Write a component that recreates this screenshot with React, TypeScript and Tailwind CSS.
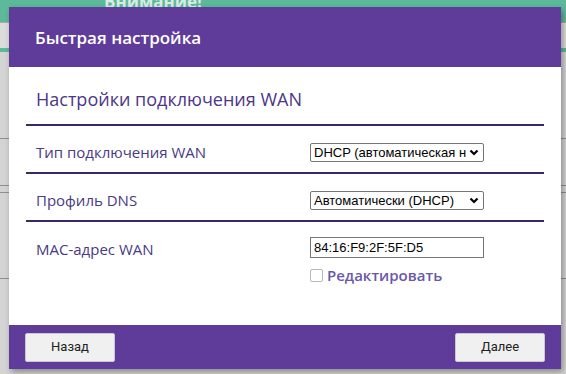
const rows = [
  { label: "Тип подключения WAN", value: "DHCP (автоматическая настройка)" },
  { label: "Профиль DNS", value: "Автоматически (DHCP)" },
];

const arial = { fontFamily: '"Liberation Sans", Arial, sans-serif' };

function Chevron() {
  return (
    <svg className="h-[9px] w-[10px]" viewBox="0 0 10 9" fill="none">
      <path d="M1.5 2.5 L5 6 L8.5 2.5" stroke="#000" strokeWidth="2.2" />
    </svg>
  );
}

function FakeSelect({ value }: { value: string }) {
  return (
    <div className="flex h-[19px] w-[174px] items-center rounded-[2px] border border-[#767676] bg-white pl-[3px] pr-[4px]" style={arial}>
      <span className="flex-1 overflow-hidden whitespace-nowrap text-[13px] leading-[15px] text-black">{value}</span>
      <span className="ml-[3px] flex items-center bg-white">
        <Chevron />
      </span>
    </div>
  );
}

export default function App() {
  return (
    <div
      className="relative h-[374px] w-[566px] overflow-hidden bg-[#d6d6d6]"
      style={{ fontFamily: '"Open Sans", "Noto Sans", sans-serif' }}
    >
      {/* page behind the dialog */}
      <div className="flex flex-col">
        <div className="h-[22px] bg-[#5db99a] pl-[104px]">
          <div className="-mt-[11px] text-[17px] font-bold text-[#d9ece4]">Внимание!</div>
        </div>
        <div className="h-[26px] border-t border-[#a9a9a9] bg-[#dcdcdc]" />
        <div className="h-[4px] bg-[#5db99a]" />
        <div className="h-[86px] bg-[#d4d4d4]" />
        <div className="h-[47px] border-t border-[#8f8f8f] bg-[#d4d4d4]" />
        <div className="h-[7px] border-t border-[#8f8f8f] bg-[#d4d4d4]" />
        <div className="h-[86px] border-t border-[#8f8f8f] bg-[#d4d4d4]" />
        <div className="h-[96px] border-t border-[#8f8f8f] bg-[#d4d4d4]" />
      </div>

      {/* dialog */}
      <div className="absolute left-[9px] top-[7px] flex h-[362px] w-[552px] flex-col bg-white shadow-[2px_3px_6px_rgba(0,0,0,0.35)]">
        <div className="flex h-[60px] items-center bg-[#5f3c9a] pl-[26px] pt-[2px]">
          <h1 className="text-[17px] font-semibold text-white">Быстрая настройка</h1>
        </div>

        <div className="flex flex-1 flex-col px-[17px]">
          <h2 className="pl-[10px] pt-[20px] text-[18px] leading-[24px] text-[#4b3689]">Настройки подключения WAN</h2>
          <div className="mt-[13px] h-[2px] bg-[#3b2768]" />

          {rows.map((r) => (
            <div key={r.label}>
              <div className="grid h-[46px] grid-cols-[284px_1fr] items-center pt-[6px]">
                <span className="pl-[10px] text-[15px] text-[#483a84]">{r.label}</span>
                <FakeSelect value={r.value} />
              </div>
              <div className="h-[2px] bg-[#3b2768]" />
            </div>
          ))}

          <div className="grid grid-cols-[284px_1fr] pt-[15px]">
            <span className="pl-[10px] pt-[1px] text-[15px] font-medium leading-[22px] text-[#483a84]">MAC-адрес WAN</span>
            <div className="flex flex-col">
              <div className="flex h-[21px] w-[174px] items-center border border-[#767676] bg-white pl-[3px] text-[13px] text-black" style={arial}>
                84:16:F9:2F:5F:D5
              </div>
              <label className="mt-[8px] flex items-center gap-[4px]">
                <span className="h-[13px] w-[13px] rounded-[2px] border border-[#b8b8b8] bg-white" />
                <span className="text-[15px] font-semibold leading-[18px] text-[#6a58a8]">Редактировать</span>
              </label>
            </div>
          </div>
        </div>

        <div className="flex h-[44px] items-center justify-between bg-[#5f3c9a] px-[16px]">
          <button className="h-[29px] w-[90px] rounded-[2px] border border-[#c9c9c9] bg-[#f0f0f0] text-[13px] text-[#222]" style={{ fontFamily: "Roboto, sans-serif" }}>Назад</button>
          <button className="h-[29px] w-[90px] rounded-[2px] border border-[#c9c9c9] bg-[#f0f0f0] text-[13px] text-[#222]" style={{ fontFamily: "Roboto, sans-serif" }}>Далее</button>
        </div>
      </div>
    </div>
  );
}
